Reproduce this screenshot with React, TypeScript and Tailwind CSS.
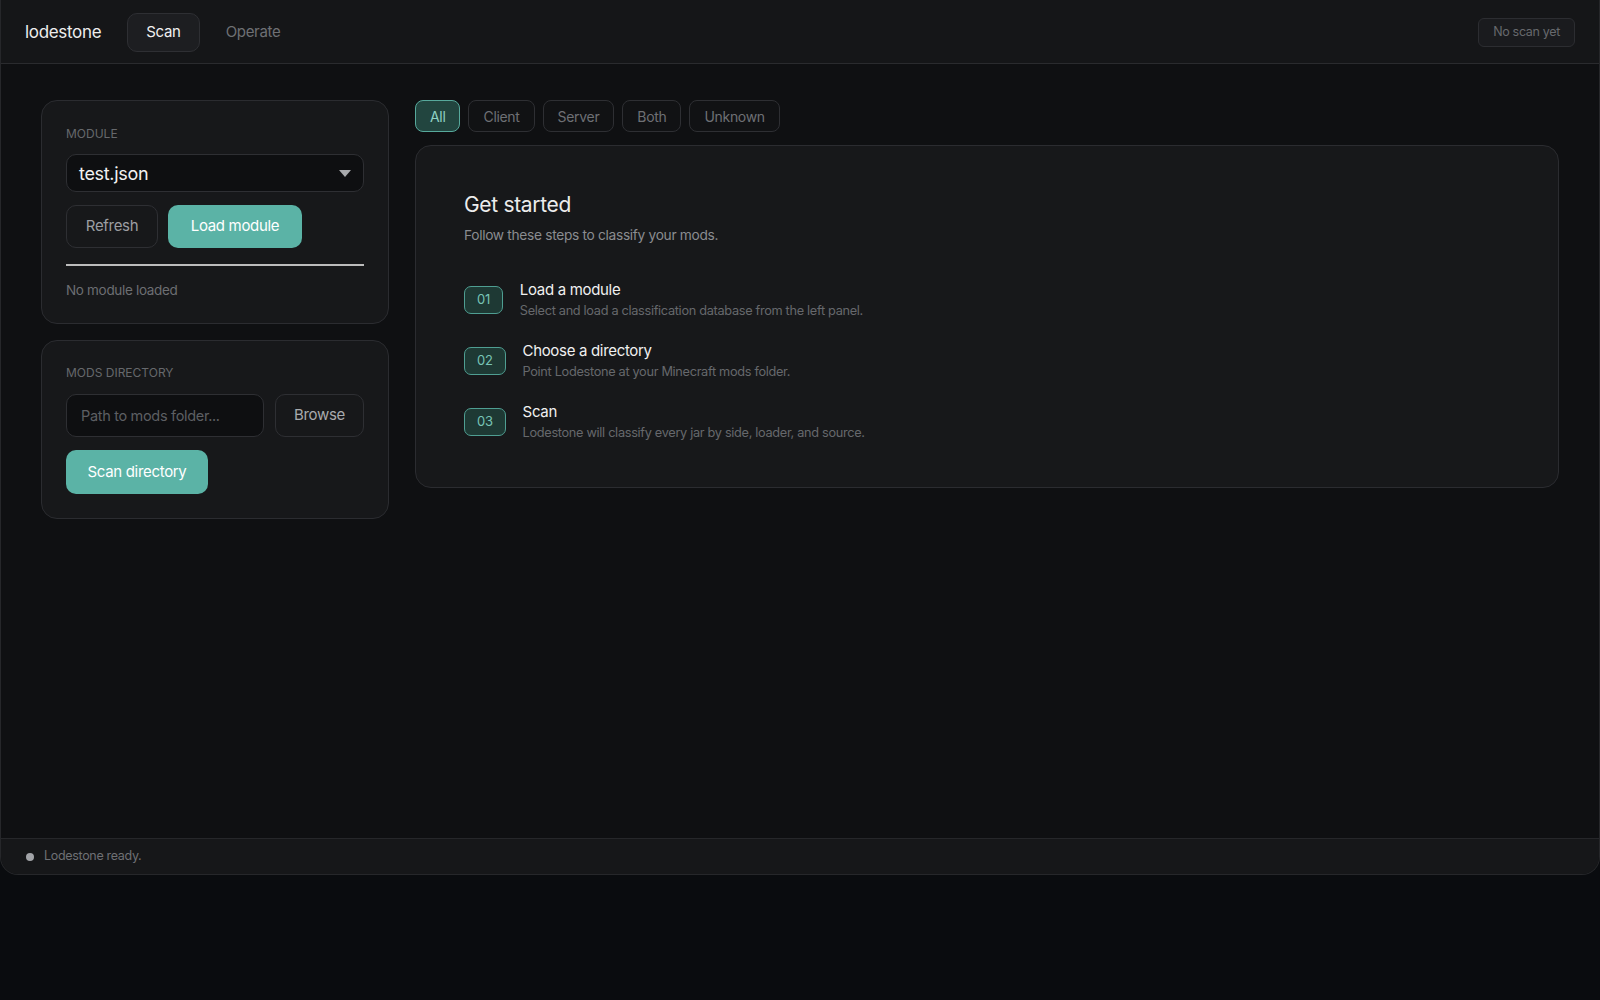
const filters = ["All", "Client", "Server", "Both", "Unknown"];

const steps = [
  {
    n: "01",
    title: "Load a module",
    body: "Select and load a classification database from the left panel.",
  },
  {
    n: "02",
    title: "Choose a directory",
    body: "Point Lodestone at your Minecraft mods folder.",
  },
  {
    n: "03",
    title: "Scan",
    body: "Lodestone will classify every jar by side, loader, and source.",
  },
];

const Label = ({ children }: { children: string }) => (
  <div className="text-[12px] leading-4 tracking-normal uppercase text-[#66686c]">{children}</div>
);

const App = () => {
  return (
    <div
      className="min-h-screen bg-[#0a0c0f] tracking-[-0.02em]"
      style={{ fontFamily: "Inter, 'Noto Sans', sans-serif" }}
    >
      <div className="flex h-[875px] flex-col overflow-hidden rounded-b-[18px] border border-t-0 border-[#26272a] bg-[#0f1012]">
        <header className="flex h-16 shrink-0 items-center border-b border-[#2a2b2e] bg-[#151618] pl-6 pr-6 pt-[2px]">
          <span className="text-[17px] text-[#ededed]">lodestone</span>
          <nav className="ml-[26px] flex items-center gap-2">
            <button className="h-[39px] rounded-[10px] border border-[#2e2f33] bg-[#1d1e21] px-[18px] text-[15px] text-[#f0f0f0]">
              Scan
            </button>
            <button className="h-[39px] rounded-[10px] px-[18px] text-[15px] text-[#6e7074]">
              Operate
            </button>
          </nav>
          <span className="ml-auto flex h-[29px] items-center rounded-md border border-[#2c2d31] bg-[#1a1b1e] px-[14px] text-[12.5px] text-[#67696d]">
            No scan yet
          </span>
        </header>

        <main className="flex flex-1 gap-[26px] pl-10 pr-10 pt-9">
          <aside className="flex w-[348px] shrink-0 flex-col gap-4">
            <section className="rounded-2xl border border-[#2b2c30] bg-[#17181a] px-6 pt-[25px] pb-[23px]">
              <Label>Module</Label>
              <div className="mt-3 flex h-[38px] items-center justify-between rounded-[10px] border border-[#2e2f33] bg-[#0e0f11] pl-3 pr-3">
                <span className="text-[18px] text-[#f2f2f2]">test.json</span>
                <span className="h-0 w-0 border-x-[6px] border-t-[7px] border-x-transparent border-t-[#a8aaad]" />
              </div>
              <div className="mt-[13px] flex gap-[10px]">
                <button className="h-[43px] w-[92px] rounded-[10px] border border-[#2e2f33] bg-[#17181a] text-[15px] text-[#9c9ea2]">
                  Refresh
                </button>
                <button className="h-[43px] w-[134px] rounded-[10px] bg-[#5bb3a6] text-[15px] text-white">
                  Load module
                </button>
              </div>
              <div className="mt-4 h-[2px] bg-[#bcbcbc]" />
              <p className="mt-[14px] text-[13.5px] leading-5 text-[#6c6e72]">No module loaded</p>
            </section>

            <section className="rounded-2xl border border-[#2b2c30] bg-[#17181a] px-6 pt-6 pb-6">
              <Label>Mods directory</Label>
              <div className="mt-[13px] flex gap-[11px]">
                <input
                  placeholder="Path to mods folder..."
                  className="h-[43px] w-[198px] rounded-[10px] border border-[#2e2f33] bg-[#0e0f11] px-[14px] text-[14.5px] text-[#e0e0e0] outline-none placeholder:text-[#5d5f63]"
                />
                <button className="h-[43px] w-[90px] rounded-[10px] border border-[#2e2f33] bg-[#17181a] text-[15px] text-[#a8aaad]">
                  Browse
                </button>
              </div>
              <button className="mt-[13px] h-[44px] w-[142px] rounded-[10px] bg-[#5bb3a6] text-[15px] text-white">
                Scan directory
              </button>
            </section>
          </aside>

          <section className="flex flex-1 flex-col gap-[13px]">
            <div className="flex gap-2">
              {filters.map(f =>
                f === "All" ? (
                  <button
                    key={f}
                    className="h-8 rounded-lg border border-[#57a99c] bg-[#22453f] px-[14px] text-[14px] text-[#8fd1c4]"
                  >
                    {f}
                  </button>
                ) : (
                  <button
                    key={f}
                    className="h-8 rounded-lg border border-[#2e2f33] bg-[#111214] px-[14px] text-[14px] text-[#6e7074]"
                  >
                    {f}
                  </button>
                ),
              )}
            </div>

            <div className="rounded-2xl border border-[#2b2c30] bg-[#17181a] px-12 pt-[45px] pb-[45px]">
              <h2 className="text-[21px] leading-7 text-[#ececec]">Get started</h2>
              <p className="mt-[6px] text-[13.75px] leading-5 text-[#8a8c90]">
                Follow these steps to classify your mods.
              </p>
              <ol className="mt-[35px] flex flex-col gap-[21px]">
                {steps.map(s => (
                  <li key={s.n} className="flex items-center gap-[17px]">
                    <span className="flex h-[28px] items-center justify-center rounded-[7px] border border-[#4f9e92] bg-[#1e3934] px-[12px] text-[13px] text-[#78c4b6]">
                      {s.n}
                    </span>
                    <div>
                      <div className="text-[15px] leading-5 text-[#f0f0f0]">{s.title}</div>
                      <div className="mt-[2px] text-[12.75px] leading-[18px] text-[#66686c]">{s.body}</div>
                    </div>
                  </li>
                ))}
              </ol>
            </div>
          </section>
        </main>

        <footer className="flex h-[36px] shrink-0 items-center gap-[10px] border-t border-[#26272a] bg-[#161719] px-[25px]">
          <span className="h-2 w-2 rounded-full bg-[#a2a4a8]" />
          <span className="text-[12.5px] text-[#6e7074]">Lodestone ready.</span>
        </footer>
      </div>
    </div>
  );
};

export default App;
